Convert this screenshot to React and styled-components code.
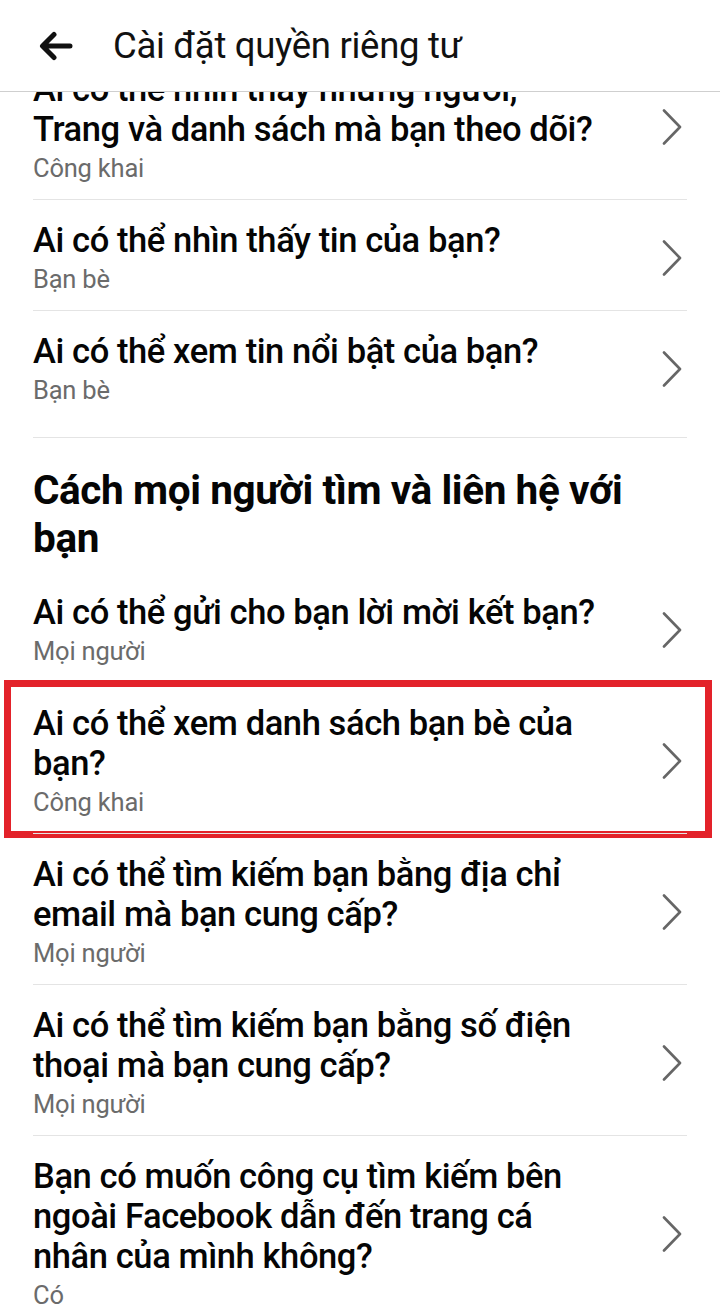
import styled, { createGlobalStyle } from "styled-components";

const GlobalStyle = createGlobalStyle`
  html, body {
    margin: 0;
    padding: 0;
    background: #ffffff;
  }
  body {
    font-family: Roboto, "Noto Sans", "Liberation Sans", sans-serif;
    color: #050505;
  }
`;

const Screen = styled.div`
  width: 720px;
  height: 1314px;
  display: flex;
  flex-direction: column;
  overflow: hidden;
  background: #fff;
`;

const Header = styled.header`
  flex: 0 0 91px;
  display: flex;
  align-items: center;
  padding-left: 38px;
  gap: 40px;
  border-bottom: 1px solid #cfcfcf;
  background: #fff;
`;

const BackButton = styled.button`
  border: 0;
  background: none;
  padding: 0;
  width: 35px;
  height: 30px;
  display: flex;
  align-items: center;
  justify-content: center;
  cursor: pointer;
`;

const HeaderTitle = styled.h1`
  margin: 0;
  font-size: 36.5px;
  font-weight: 400;
  color: #111;
  letter-spacing: -0.3px;
`;

const Viewport = styled.div`
  flex: 1;
  overflow: hidden;
`;

const Content = styled.div`
  margin-top: -43px;
`;

const Section = styled.section`
  padding: 0 33px;
`;

const SectionEnd = styled.hr`
  margin: 16px 0 0;
  border: 0;
  border-top: 1px solid #e4e4e4;
`;

const SectionTitle = styled.h2`
  margin: 0;
  padding: 28px 40px 10px 0;
  font-size: 40.5px;
  line-height: 48px;
  font-weight: 700;
  color: #050505;
  letter-spacing: -0.4px;
`;

const Row = styled.div`
  position: relative;
  display: flex;
  align-items: center;
  padding: 20px 0 15px;
  border-top: ${(p) => (p.$first ? "0" : "1px solid #e4e4e4")};
  cursor: pointer;
`;

const Highlight = styled.div`
  position: absolute;
  left: -29px;
  right: -25px;
  top: -3px;
  bottom: -5px;
  border: 7px solid #e3222a;
  pointer-events: none;
`;

const RowText = styled.div`
  flex: 1;
  padding-right: 30px;
  white-space: nowrap;
`;

const RowTitle = styled.div`
  font-size: 34.5px;
  line-height: 40px;
  font-weight: 500;
  color: #050505;
  letter-spacing: -0.4px;
`;

const RowValue = styled.div`
  margin-top: 3px;
  font-size: 25.5px;
  line-height: 32px;
  color: #6b6b6b;
  letter-spacing: -0.2px;
`;

const Chevron = styled.svg`
  flex: 0 0 auto;
  width: 20px;
  height: 36px;
  margin-right: 5px;
`;

function Arrow() {
  return (
    <svg width="35" height="30" viewBox="0 0 35 30">
      <path
        d="M32 15H5M16 3.5L4.5 15L16 26.5"
        fill="none"
        stroke="#111"
        strokeWidth="5"
        strokeLinecap="round"
        strokeLinejoin="round"
      />
    </svg>
  );
}

function SettingRow({ title, value, first, highlighted }) {
  return (
    <Row $first={first}>
      {highlighted && <Highlight />}
      <RowText>
        <RowTitle>{title}</RowTitle>
        <RowValue>{value}</RowValue>
      </RowText>
      <Chevron viewBox="0 0 20 36">
        <path
          d="M2 1.5L18 18L2 34.5"
          fill="none"
          stroke="#666"
          strokeWidth="2.6"
          strokeLinecap="round"
          strokeLinejoin="round"
        />
      </Chevron>
    </Row>
  );
}

const activity = [
  {
    title: (
      <>
        Ai có thể nhìn thấy những người,
        <br />
        Trang và danh sách mà bạn theo dõi?
      </>
    ),
    value: "Công khai",
  },
  { title: "Ai có thể nhìn thấy tin của bạn?", value: "Bạn bè" },
  { title: "Ai có thể xem tin nổi bật của bạn?", value: "Bạn bè" },
];

const contact = [
  { title: "Ai có thể gửi cho bạn lời mời kết bạn?", value: "Mọi người" },
  {
    title: (
      <>
        Ai có thể xem danh sách bạn bè của
        <br />
        bạn?
      </>
    ),
    value: "Công khai",
    highlighted: true,
  },
  {
    title: (
      <>
        Ai có thể tìm kiếm bạn bằng địa chỉ
        <br />
        email mà bạn cung cấp?
      </>
    ),
    value: "Mọi người",
  },
  {
    title: (
      <>
        Ai có thể tìm kiếm bạn bằng số điện
        <br />
        thoại mà bạn cung cấp?
      </>
    ),
    value: "Mọi người",
  },
  {
    title: (
      <>
        Bạn có muốn công cụ tìm kiếm bên
        <br />
        ngoài Facebook dẫn đến trang cá
        <br />
        nhân của mình không?
      </>
    ),
    value: "Có",
  },
];

export default function App() {
  return (
    <>
      <GlobalStyle />
      <Screen>
        <Header>
          <BackButton aria-label="Quay lại">
            <Arrow />
          </BackButton>
          <HeaderTitle>Cài đặt quyền riêng tư</HeaderTitle>
        </Header>
        <Viewport>
          <Content>
            <Section>
              {activity.map((item, i) => (
                <SettingRow key={i} first={i === 0} {...item} />
              ))}
              <SectionEnd />
            </Section>
            <Section>
              <SectionTitle>
                Cách mọi người tìm và liên hệ với bạn
              </SectionTitle>
              {contact.map((item, i) => (
                <SettingRow key={i} first={i === 0} {...item} />
              ))}
            </Section>
          </Content>
        </Viewport>
      </Screen>
    </>
  );
}
